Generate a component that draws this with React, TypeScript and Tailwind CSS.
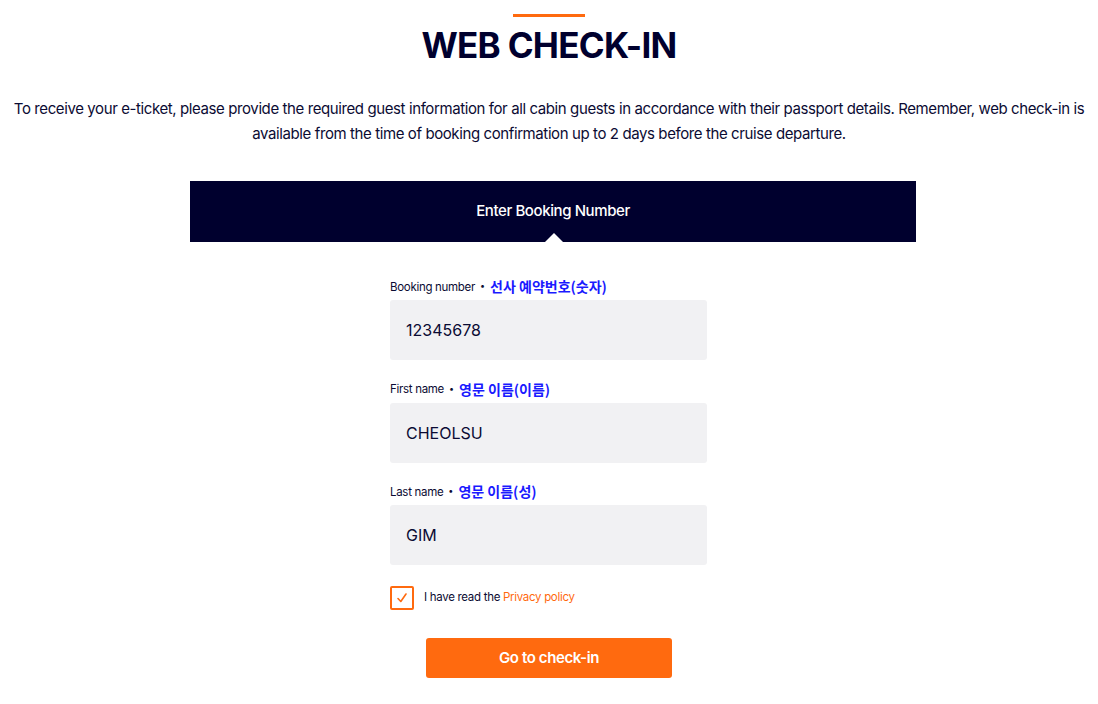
import React from 'react';

const font = { fontFamily: 'Inter, "Noto Sans CJK KR", sans-serif' };

const Field: React.FC<{ label: string; hint: string; value: string }> = ({ label, hint, value }) => (
  <div className="flex flex-col">
    <div className="flex items-end h-[21px] mb-[4px]">
      <span className="text-[11.5px] text-[#0b0b33] tracking-[-0.3px]">{label}</span>
      <span className="text-[9px] text-[#0b0b33] ml-[5px] mb-[6px] leading-none">•</span>
      <span className="text-[14px] font-bold text-[#1a1aff] ml-[5px] leading-[20px]" style={{ fontFamily: '"Noto Sans CJK KR", sans-serif' }}>
        {hint}
      </span>
    </div>
    <div className="h-[60px] bg-[#f1f1f3] rounded-[3px] flex items-center px-[16px] text-[16px] text-[#0b0b33]">{value}</div>
  </div>
);

export default function App() {
  return (
    <div className="w-[1098px] h-[704px] bg-white overflow-hidden text-[#0b0b33]" style={font}>
      {/* Title */}
      <div className="flex flex-col items-center pt-[14px]">
        <div className="w-[72px] h-[3px] bg-[#ff6a0f]" />
        <h1 className="mt-[6px] text-[35px] leading-[44px] font-bold tracking-[-0.7px] text-[#00002e]">WEB CHECK-IN</h1>
      </div>

      {/* Description */}
      <p className="mt-[29px] text-center text-[15px] leading-[25px] tracking-[-0.4px] px-[4px]">
        To receive your e-ticket, please provide the required guest information for all cabin guests in accordance with their passport details. Remember, web check-in is available from the time of booking confirmation up to 2 days before the cruise departure.
      </p>

      {/* Tab bar */}
      <div className="mt-[35px] ml-[190px] w-[726px] h-[61px] bg-[#00002e] relative flex items-center justify-center">
        <span className="text-white text-[15px] font-medium tracking-[-0.4px]">Enter Booking Number</span>
        <div className="absolute bottom-0 left-[355px] w-0 h-0 border-l-[9px] border-r-[9px] border-b-[9px] border-l-transparent border-r-transparent border-b-white" />
      </div>

      {/* Form */}
      <div className="ml-[390px] w-[317px] mt-[33px] flex flex-col gap-[17.5px]">
        <Field label="Booking number" hint="선사 예약번호(숫자)" value="12345678" />
        <Field label="First name" hint="영문 이름(이름)" value="CHEOLSU" />
        <Field label="Last name" hint="영문 이름(성)" value="GIM" />
      </div>

      <div className="ml-[390px] w-[317px] mt-[21px] flex items-center">
        <div className="w-[24px] h-[24px] border-2 border-[#ff6a0f] rounded-[2px] flex items-center justify-center">
          <svg width="12" height="12" viewBox="0 0 12 12" fill="none">
            <path d="M2 6.5 L4.8 9.5 L10 2" stroke="#ff6a0f" strokeWidth="1.6" strokeLinecap="round" strokeLinejoin="round" />
          </svg>
        </div>
        <span className="ml-[10px] text-[11.5px] tracking-[-0.3px]">
          I have read the <span className="text-[#ff6a0f]">Privacy policy</span>
        </span>
      </div>

      <div className="ml-[426px] mt-[28px]">
        <button className="w-[246px] h-[40px] bg-[#ff6a0f] rounded-[3px] text-white text-[15px] font-semibold tracking-[-0.4px]">
          Go to check-in
        </button>
      </div>
    </div>
  );
}
